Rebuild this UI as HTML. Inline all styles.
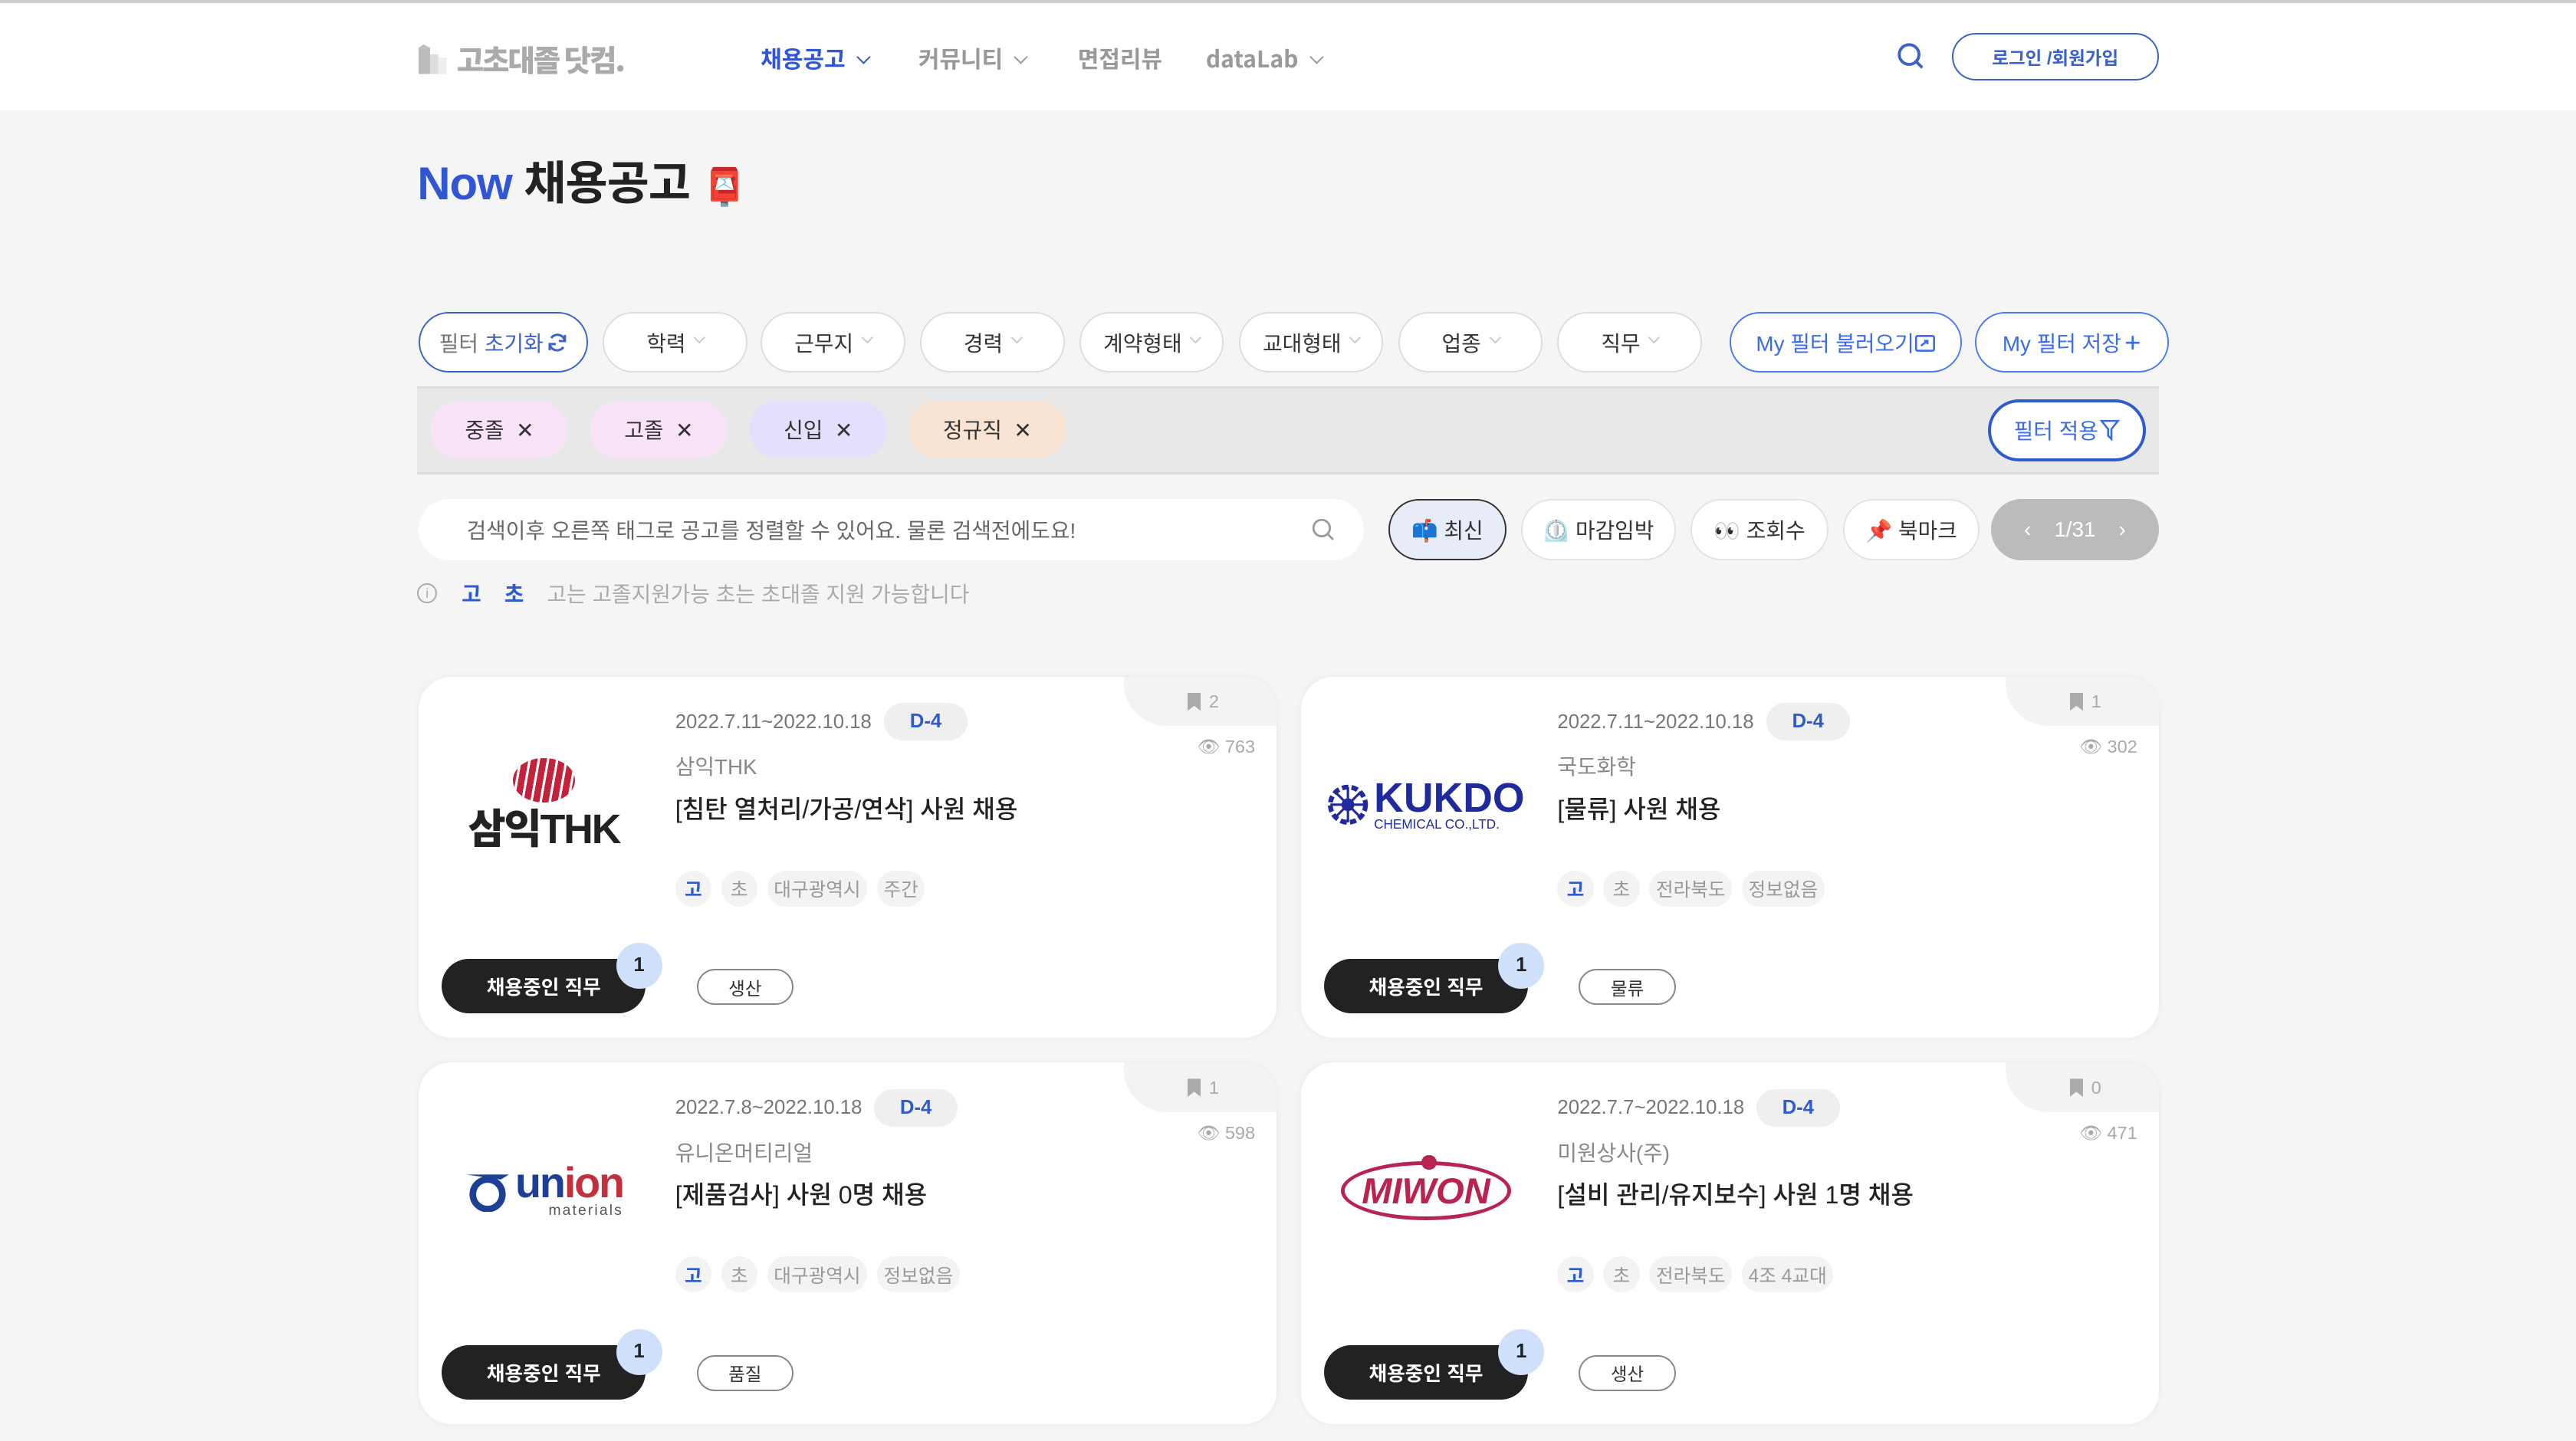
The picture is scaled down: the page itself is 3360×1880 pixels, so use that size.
<!DOCTYPE html>
<html><head><meta charset="utf-8">
<style>
*{box-sizing:border-box;margin:0;padding:0}
html,body{width:3360px;height:1880px;overflow:hidden;background:#f5f5f5}
#w{zoom:2.142857;width:1568px;height:878px;position:relative;font-family:"Liberation Sans","Noto Sans CJK KR",sans-serif;color:#222;background:#f5f5f5}
.a{position:absolute}
.hdr{left:0;top:0;width:1568px;height:67px;background:#fff;border-top:2px solid #ccc}
.nav{font-size:14px;font-weight:700;color:#999;top:25px;font-family:"Noto Sans CJK KR",sans-serif;line-height:20px}
.chev{display:inline-block;width:6px;height:6px;border-right:1.3px solid currentColor;border-bottom:1.3px solid currentColor;transform:rotate(45deg);margin-left:8px;position:relative;top:-3px}
.fb{top:190px;height:37px;border:1px solid #ddd;border-radius:19px;background:#fff;font-size:13px;display:flex;align-items:center;justify-content:center;color:#333}
.fb .chev{border-color:#ccc;width:5px;height:5px;margin-left:6px}
.blue{color:#3a6ce8;border-color:#4a7af0}
.chip{top:244px;height:35px;border-radius:18px;font-size:13px;display:flex;align-items:center;justify-content:center;color:#333}
.sc{top:304px;height:37px;border:1px solid #e3e3e3;border-radius:19px;background:#fff;font-size:13px;display:flex;align-items:center;justify-content:center;color:#333;gap:4px}
.card{width:522px;height:220px;background:#fff;border-radius:20px;box-shadow:0 0 4px rgba(0,0,0,.06);overflow:hidden}
.card .tab{right:0;top:0;width:93px;height:30px;background:#f3f3f3;border-bottom-left-radius:26px}
.card .bm{right:35px;top:9px;font-size:11px;color:#aaa;display:flex;align-items:center;gap:5px}
.card .bm i{display:block;width:8px;height:11px;background:#aaa;clip-path:polygon(0 0,100% 0,100% 100%,50% 72%,0 100%)}
.card .eye{right:13px;top:36px;font-size:11px;color:#aaa;display:flex;align-items:center;gap:3px}
.dt{left:156px;top:21px;font-size:12px;color:#777}
.dd{left:283px;top:16px;width:51px;height:23px;border-radius:12px;background:#efefef;color:#2f5bd0;font-weight:700;font-size:12px;display:flex;align-items:center;justify-content:center}
.co{left:156px;top:45px;font-size:13px;color:#888}
.ti{left:156px;top:69px;font-size:15px;color:#222;font-weight:500}
.tags{left:156px;top:118px;display:flex;gap:6px}
.tags span{height:22px;min-width:22px;padding:0 4px;border-radius:11px;background:#f3f3f3;font-size:11.5px;color:#999;display:flex;align-items:center;justify-content:center}
.tags span.g{color:#2f5bd0;font-weight:700}
.job{left:14px;top:172px;width:124px;height:33px;border-radius:17px;background:#222;color:#fff;font-size:12px;font-weight:700;display:flex;align-items:center;justify-content:center}
.num{left:120px;top:162px;width:28px;height:28px;border-radius:50%;background:#cfe0fb;font-size:12px;font-weight:700;display:flex;align-items:center;justify-content:center;color:#222}
.jt{left:169px;top:178px;width:59px;height:22px;border:1px solid #888;border-radius:11px;font-size:11px;display:flex;align-items:center;justify-content:center;color:#333}
.logo{left:16px;top:28px;width:120px;height:100px;display:flex;align-items:center;justify-content:center}
</style></head><body><div id="w">
<div class="a hdr"></div>
<div class="a" style="left:255px;top:23px;display:flex;align-items:center;gap:5px">
 <svg width="18" height="18" viewBox="0 0 18 18"><rect x="0" y="2" width="7" height="16" fill="#bbb"/><rect x="7" y="6" width="5" height="12" fill="#ddd"/><rect x="12" y="8" width="5" height="10" fill="#eee"/><polygon points="0,2 3,0 7,2" fill="#bbb"/></svg>
 <span style="font-size:18px;font-weight:900;color:#aaa;letter-spacing:-1px;font-family:'Noto Sans CJK KR',sans-serif">고초대졸 닷컴.</span>
</div>
<div class="a nav" style="left:463px;color:#3056d3">채용공고<span class="chev"></span></div>
<div class="a nav" style="left:559px">커뮤니티<span class="chev"></span></div>
<div class="a nav" style="left:656px">면접리뷰</div>
<div class="a nav" style="left:734px">dataLab<span class="chev"></span></div>
<svg class="a" style="left:1154px;top:25px" width="18" height="18" viewBox="0 0 18 18"><circle cx="8" cy="8" r="6" fill="none" stroke="#3a62c9" stroke-width="1.8"/><line x1="12.3" y1="12.3" x2="16" y2="16" stroke="#3a62c9" stroke-width="1.8"/></svg>
<div class="a" style="left:1188px;top:20px;width:126px;height:29px;border:1.3px solid #3a62c9;border-radius:15px;font-size:11px;font-weight:700;color:#3a62c9;display:flex;align-items:center;justify-content:center">로그인 /회원가입</div>

<div class="a" style="left:254px;top:89px;font-size:28px;font-weight:700;letter-spacing:-0.5px"><span style="color:#3056d3">Now</span> 채용공고 <span style="font-size:22px">📮</span></div>

<div class="a fb blue" style="left:255px;width:103px;color:#777;border-color:#3a62c9;border-width:1.3px">필터&nbsp;<span style="color:#3a62c9">초기화</span>
 <svg width="13" height="13" viewBox="0 0 14 14" style="margin-left:2px"><path d="M12 6A5 5 0 0 0 3 4M2 8a5 5 0 0 0 9 2" fill="none" stroke="#3a62c9" stroke-width="1.5"/><path d="M12 2v4H8M2 12V8h4" fill="none" stroke="#3a62c9" stroke-width="1.5"/></svg></div>
<div class="a fb" style="left:367px;width:88px">학력<span class="chev"></span></div>
<div class="a fb" style="left:463px;width:88px">근무지<span class="chev"></span></div>
<div class="a fb" style="left:560px;width:88px">경력<span class="chev"></span></div>
<div class="a fb" style="left:657px;width:88px">계약형태<span class="chev"></span></div>
<div class="a fb" style="left:754px;width:88px">교대형태<span class="chev"></span></div>
<div class="a fb" style="left:851px;width:88px">업종<span class="chev"></span></div>
<div class="a fb" style="left:948px;width:88px">직무<span class="chev"></span></div>
<div class="a fb blue" style="left:1053px;width:141px;border-width:1.3px">My 필터 불러오기<svg width="13" height="12" viewBox="0 0 13 12"><rect x="1" y="2" width="11" height="9" rx="1" fill="none" stroke="#3a6ce8" stroke-width="1.2"/><path d="M4 8l4-3M6 5h2v2" stroke="#3a6ce8" fill="none" stroke-width="1.2"/></svg></div>
<div class="a fb blue" style="left:1202px;width:118px;border-width:1.3px">My 필터 저장<span style="font-size:17px;margin-left:2px">+</span></div>

<div class="a" style="left:254px;top:235px;width:1060px;height:54px;background:#e8e8e8;border-top:1.5px solid #ddd;border-bottom:1.5px solid #ddd"></div>
<div class="a chip" style="left:262px;width:84px;background:#f8e3f7">중졸&nbsp;&nbsp;✕</div>
<div class="a chip" style="left:359px;width:84px;background:#f8e3f7">고졸&nbsp;&nbsp;✕</div>
<div class="a chip" style="left:456px;width:84px;background:#e3dffc">신입&nbsp;&nbsp;✕</div>
<div class="a chip" style="left:553px;width:96px;background:#f9e4d3">정규직&nbsp;&nbsp;✕</div>
<div class="a" style="left:1210px;top:243px;width:96px;height:38px;border:2px solid #2f5bd0;border-radius:19px;background:#fff;font-size:13px;color:#3a6ce8;display:flex;align-items:center;justify-content:center">필터 적용<svg width="12" height="13" viewBox="0 0 12 13" style="margin-left:1px"><path d="M1 1h10L7 6v6L5 10V6z" fill="none" stroke="#3a6ce8" stroke-width="1.2"/></svg></div>

<div class="a" style="left:255px;top:304px;width:575px;height:37px;background:#fff;border-radius:19px;font-size:13px;color:#666;padding:9px 0 0 29px">검색이후 오른쪽 태그로 공고를 정렬할 수 있어요. 물론 검색전에도요!</div>
<svg class="a" style="left:798px;top:315px" width="15" height="15" viewBox="0 0 15 15"><circle cx="6.5" cy="6.5" r="5" fill="none" stroke="#999" stroke-width="1.3"/><line x1="10" y1="10" x2="13.5" y2="13.5" stroke="#999" stroke-width="1.3"/></svg>
<div class="a sc" style="left:845px;width:72px;background:#e8ecf8;border:1.3px solid #333">📫 최신</div>
<div class="a sc" style="left:926px;width:94px">⏲️ 마감임박</div>
<div class="a sc" style="left:1029px;width:84px">👀 조회수</div>
<div class="a sc" style="left:1122px;width:83px">📌 북마크</div>
<div class="a sc" style="left:1212px;width:102px;background:#bbb;border-color:#bbb;color:#fff;gap:14px">‹ <span>1/31</span> ›</div>

<div class="a" style="left:254px;top:352px;font-size:13px;color:#aaa;display:flex;align-items:center">
 <span style="width:12px;height:12px;border:1px solid #aaa;border-radius:50%;font-size:8px;display:flex;align-items:center;justify-content:center">i</span>
 <b style="color:#2f5bd0;margin-left:15px">고</b><b style="color:#2f5bd0;margin-left:14px">초</b><span style="margin-left:14px">고는 고졸지원가능 초는 초대졸 지원 가능합니다</span></div>

<!-- card 1 -->
<div class="a card" style="left:255px;top:412px">
 <div class="a tab"></div><div class="a bm"><i></i>2</div><div class="a eye">👁&#xFE0E; 763</div>
 <div class="a logo"><div style="text-align:center"><div style="width:38px;height:27px;margin:0 auto 4px;border-radius:50%;background:repeating-linear-gradient(100deg,#c4213d 0 4px,#fff 4px 5.5px)"></div><div style="font-size:25px;font-weight:900;color:#222;letter-spacing:-1px;line-height:26px">삼익THK</div></div></div>
 <div class="a dt">2022.7.11~2022.10.18</div><div class="a dd">D-4</div>
 <div class="a co">삼익THK</div><div class="a ti">[침탄 열처리/가공/연삭] 사원 채용</div>
 <div class="a tags"><span class="g">고</span><span>초</span><span>대구광역시</span><span>주간</span></div>
 <div class="a job">채용중인 직무</div><div class="a num">1</div><div class="a jt">생산</div>
</div>
<!-- card 2 -->
<div class="a card" style="left:792px;top:412px">
 <div class="a tab"></div><div class="a bm"><i></i>1</div><div class="a eye">👁&#xFE0E; 302</div>
 <div class="a logo" style="gap:3px"><svg width="26" height="26" viewBox="0 0 26 26"><circle cx="13" cy="13" r="11" fill="none" stroke="#1f2a9c" stroke-width="3" stroke-dasharray="4 2"/><circle cx="13" cy="13" r="3" fill="none" stroke="#1f2a9c" stroke-width="2"/><path d="M13 2v22M2 13h22M5 5l16 16M21 5L5 21" stroke="#1f2a9c" stroke-width="1.5"/></svg><div><div style="font-size:25px;font-weight:900;color:#1f2a9c;line-height:24px;font-family:'Liberation Sans',sans-serif">KUKDO</div><div style="font-size:8px;color:#1f2a9c;line-height:8px">CHEMICAL CO.,LTD.</div></div></div>
 <div class="a dt">2022.7.11~2022.10.18</div><div class="a dd">D-4</div>
 <div class="a co">국도화학</div><div class="a ti">[물류] 사원 채용</div>
 <div class="a tags"><span class="g">고</span><span>초</span><span>전라북도</span><span>정보없음</span></div>
 <div class="a job">채용중인 직무</div><div class="a num">1</div><div class="a jt">물류</div>
</div>
<!-- card 3 -->
<div class="a card" style="left:255px;top:647px">
 <div class="a tab"></div><div class="a bm"><i></i>1</div><div class="a eye">👁&#xFE0E; 598</div>
 <div class="a logo" style="gap:3px"><svg width="28" height="26" viewBox="0 0 28 26"><path d="M1 3h26l-5 3" fill="#1e3f96"/><circle cx="14" cy="15" r="9" fill="none" stroke="#1e3f96" stroke-width="4"/></svg><div><div style="font-size:26px;font-weight:700;line-height:24px;letter-spacing:-1px"><span style="color:#1e3f96">un</span><span style="color:#c2303e">ion</span></div><div style="font-size:9px;color:#555;text-align:right;line-height:9px;letter-spacing:1px">materials</div></div></div>
 <div class="a dt">2022.7.8~2022.10.18</div><div class="a dd" style="left:277px">D-4</div>
 <div class="a co">유니온머티리얼</div><div class="a ti">[제품검사] 사원 0명 채용</div>
 <div class="a tags"><span class="g">고</span><span>초</span><span>대구광역시</span><span>정보없음</span></div>
 <div class="a job">채용중인 직무</div><div class="a num">1</div><div class="a jt">품질</div>
</div>
<!-- card 4 -->
<div class="a card" style="left:792px;top:647px">
 <div class="a tab"></div><div class="a bm"><i></i>0</div><div class="a eye">👁&#xFE0E; 471</div>
 <div class="a logo"><div style="position:relative;width:104px;height:36px;border:2.5px solid #b8234f;border-radius:50%;display:flex;align-items:center;justify-content:center"><span style="position:absolute;top:-6px;left:47px;width:9px;height:9px;border-radius:50%;background:#b8234f"></span><span style="font-size:22px;font-weight:900;font-style:italic;color:#b8234f;font-family:'Liberation Sans',sans-serif">MIWON</span></div></div>
 <div class="a dt">2022.7.7~2022.10.18</div><div class="a dd" style="left:277px">D-4</div>
 <div class="a co">미원상사(주)</div><div class="a ti">[설비 관리/유지보수] 사원 1명 채용</div>
 <div class="a tags"><span class="g">고</span><span>초</span><span>전라북도</span><span>4조 4교대</span></div>
 <div class="a job">채용중인 직무</div><div class="a num">1</div><div class="a jt">생산</div>
</div>
</div></body></html>
